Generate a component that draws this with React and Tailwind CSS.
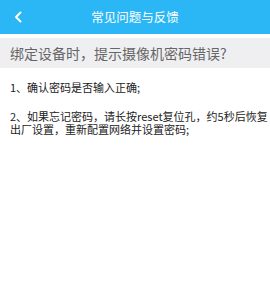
import React from 'react'

export default function App() {
  return (
    <div
      className="w-[270px] h-[289px] bg-white overflow-hidden"
      style={{ fontFamily: '"Noto Sans CJK SC", "Noto Sans", sans-serif' }}
    >
      {/* Header */}
      <div className="relative h-[34px] bg-[#2bb7f5] flex items-center justify-center">
        <button className="absolute left-[12px] top-[10px] w-[12px] h-[14px] flex items-center justify-center">
          <svg width="8" height="12" viewBox="0 0 8 12" fill="none">
            <path d="M6.5 1.5L2 6l4.5 4.5" stroke="#ffffff" strokeWidth="2" strokeLinecap="round" strokeLinejoin="round" />
          </svg>
        </button>
        <h1 className="text-[12.5px] text-white leading-none">常见问题与反馈</h1>
      </div>

      {/* Question */}
      <div className="mt-[4px] h-[30px] bg-[#efeff2] px-[10px] flex items-center">
        <p className="text-[14px] text-[#666666] leading-none">绑定设备时，提示摄像机密码错误?</p>
      </div>

      {/* Answer */}
      <div className="pt-[13px] pl-[10px] pr-[2px] text-[11px] leading-[13px] text-[#222222]">
        <p>1、确认密码是否输入正确;</p>
        <p className="mt-[16px]">
          2、如果忘记密码，请长按reset复位孔，约5秒后恢复
          <br />
          出厂设置，重新配置网络并设置密码;
        </p>
      </div>
    </div>
  )
}
